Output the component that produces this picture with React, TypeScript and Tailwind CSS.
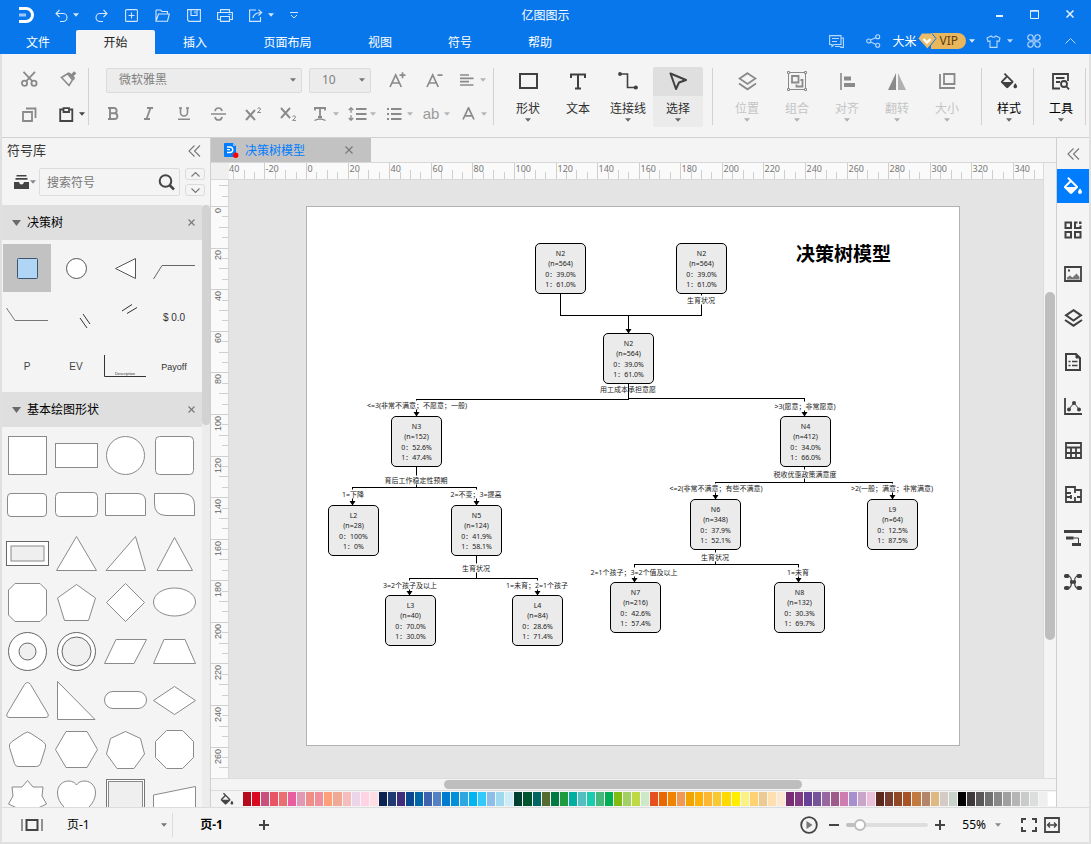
import React from "react";

type Pt = { children?: React.ReactNode };

/* ---------- small drawing helpers ---------- */

function Ico({
  w,
  h,
  box,
  sw = 1.5,
  cls = "",
  children,
}: { w: number; h: number; box?: string; sw?: number; cls?: string } & Pt) {
  return (
    <svg
      aria-hidden="true"
      width={w}
      height={h}
      viewBox={box ?? `0 0 ${w} ${h}`}
      fill="none"
      stroke="currentColor"
      strokeWidth={sw}
      className={`shrink-0 ${cls}`}
    >
      {children}
    </svg>
  );
}

function Caret({ cls = "" }: { cls?: string }) {
  return (
    <svg aria-hidden="true" width="6" height="4" viewBox="0 0 6 4" className={`shrink-0 ${cls}`}>
      <path d="M0 .3H6L3 3.7Z" fill="currentColor" />
    </svg>
  );
}

function Bucket({ size }: { size: number }) {
  return (
    <svg aria-hidden="true" width={size} height={size} viewBox="2 0 20 18" fill="currentColor" className="shrink-0">
      <path d="M16.56 8.94L7.62 0 6.21 1.41l2.38 2.38-5.15 5.15c-.59.59-.59 1.54 0 2.12l5.5 5.5c.29.29.68.44 1.06.44s.77-.15 1.06-.44l5.5-5.5c.59-.58.59-1.53 0-2.12zM5.21 10L10 5.21 14.79 10H5.21zM19 11.5s-2 2.17-2 3.5c0 1.1.9 2 2 2s2-.9 2-2c0-1.33-2-3.5-2-3.5z" />
    </svg>
  );
}

function Btn({ label, cls = "", children }: { label: string; cls?: string } & Pt) {
  return (
    <button type="button" aria-label={label} className={`flex shrink-0 items-center justify-center ${cls}`}>
      {children}
    </button>
  );
}

/* ---------- header ---------- */

function TitleBar() {
  return (
    <div className="relative flex h-[30px] items-center text-[#d3e6fc]">
      <div className="flex w-[52px] justify-center pb-px text-white">
        <Ico w={16} h={16} sw={3}>
          <path d="M1 1.5H8A6.5 6.5 0 0 1 8 14.5H1" />
          <path d="M1 8H8" stroke="#9cc9fa" />
        </Ico>
      </div>
      <Btn label="撤销" cls="w-[30px] gap-[5px]">
        <Ico w={13} h={13} sw={1.1}>
          <path d="M4.5 1L1 4.5L4.5 8M1 4.5H8a4 4 0 0 1 0 8H5" />
        </Ico>
        <Caret />
      </Btn>
      <Btn label="重做" cls="ml-1 w-[30px]">
        <Ico w={13} h={13} sw={1.1}>
          <path d="M8.5 1L12 4.5L8.5 8M12 4.5H5a4 4 0 0 0 0 8H8" />
        </Ico>
      </Btn>
      <Btn label="新建" cls="w-[31px]">
        <Ico w={13} h={13} sw={1.1}>
          <rect x=".6" y=".6" width="11.8" height="11.8" rx="1" />
          <path d="M6.5 3.5v6M3.5 6.5h6" />
        </Ico>
      </Btn>
      <Btn label="打开" cls="w-[31px]">
        <Ico w={15} h={13} sw={1.1}>
          <path d="M1 11.5V1.5Q1 1 1.5 1H5.5L7 2.5H12.5V4.5M1 12.2L3.5 5H14.3L12.5 12.2Z" />
        </Ico>
      </Btn>
      <Btn label="保存" cls="w-[31px]">
        <Ico w={14} h={13} sw={1.1}>
          <path d="M.6 .6H13.4V12.4H2L.6 11Z M4 .6V6.5H10V.6M8 2v2.5" />
        </Ico>
      </Btn>
      <Btn label="打印" cls="w-[31px]">
        <Ico w={16} h={13} sw={1.1}>
          <path d="M3.5 3.5V.6H12.5V3.5M3.5 10.5H.6V3.5H15.4V10.5H12.5M3.5 7.5H12.5V12.4H3.5ZM11.5 5.5H13.5" />
        </Ico>
      </Btn>
      <Btn label="导出" cls="w-[42px] gap-[5px]">
        <Ico w={14} h={13} sw={1.1}>
          <path d="M7 1H.6V12.4H11.5V8M4 9Q4.5 4 12.5 3.5M9.5 .6L12.7 3.5L9.5 6.5" />
        </Ico>
        <Caret />
      </Btn>
      <Btn label="自定义快速访问工具栏" cls="w-[24px]">
        <Ico w={8} h={7} sw={1}>
          <path d="M0 .5H8M1 3L4 6L7 3" />
        </Ico>
      </Btn>
      <h1 className="pointer-events-none absolute inset-x-0 top-0 pt-px text-center text-[12px] leading-[30px] font-normal text-white">
        亿图图示
      </h1>
      <div className="ml-auto flex h-full items-center pb-[2px] text-[#e6f1fe]">
        <Btn label="最小化" cls="h-full w-[35px]">
          <Ico w={7} h={6} sw={2}>
            <path d="M0 5H7" />
          </Ico>
        </Btn>
        <Btn label="最大化" cls="h-full w-[35px]">
          <Ico w={9} h={9} sw={1}>
            <path d="M.5 .5H8.5V8.5H.5ZM0 1.2H9" />
          </Ico>
        </Btn>
        <Btn label="关闭" cls="mr-1 h-full w-[35px]">
          <Ico w={8} h={8} sw={1.5}>
            <path d="M.5 .5L7.5 7.5M7.5 .5L.5 7.5" />
          </Ico>
        </Btn>
      </div>
    </div>
  );
}

const MENUS = [
  { name: "文件", cls: "w-[76px]" },
  { name: "开始", cls: "w-[79px] rounded-t-[2px] bg-[#f4f4f4] text-[#222]" },
  { name: "插入", cls: "w-20" },
  { name: "页面布局", cls: "w-[105px]" },
  { name: "视图", cls: "w-20" },
  { name: "符号", cls: "w-20" },
  { name: "帮助", cls: "w-20" },
];

function MenuBar() {
  return (
    <div className="flex h-6 items-stretch text-[12px] text-white">
      <nav className="flex">
        {MENUS.map((m) => (
          <button key={m.name} type="button" className={`shrink-0 pt-[2px] text-center leading-[22px] ${m.cls}`}>
            {m.name}
          </button>
        ))}
      </nav>
      <div className="ml-auto flex items-center pb-[2px] text-[#b9d9fb]">
        <Btn label="消息" cls="w-[37px]">
          <Ico w={15} h={13} sw={1.1}>
            <path d="M.6 .6H12V9.5H5L3 11.5V9.5H.6ZM3 3.5H10M3 6.5H8M12 3H14.4V12.4H12L11 11.5H6" />
          </Ico>
        </Btn>
        <Btn label="分享" cls="w-[37px]">
          <Ico w={15} h={14} sw={1.1}>
            <circle cx="2.7" cy="7" r="2" />
            <circle cx="11.7" cy="2.8" r="2" />
            <circle cx="11.7" cy="11.2" r="2" />
            <path d="M4.5 6L10 3.6M4.5 8L10 10.4" />
          </Ico>
        </Btn>
        <button type="button" className="flex shrink-0 items-center text-white">
          <span className="pt-px">大米</span>
          <span className="ml-[2px] flex h-4 items-center rounded-r-full bg-[#e8b65c] pr-2 text-[12px] leading-4 text-[#5f4212]">
            <svg aria-hidden="true" width="21" height="16" viewBox="0 0 21 16">
              <path d="M0 0H13V16H0Z" fill="#0977ec" />
              <path d="M4 .5H14L18 5.5L9.5 15.5L.5 5.5Z" fill="#ecbd68" />
              <path d="M14 .5L18 5.5L10 15.5" fill="none" stroke="#0977ec" />
              <path d="M5.5 6L9 9.5L12.5 6" fill="none" stroke="#fff" strokeWidth="2.4" />
            </svg>
            VIP
          </span>
          <Caret cls="ml-[3px] text-[#dcebfd]" />
        </button>
        <Btn label="主题" cls="ml-1 w-[40px] gap-[6px]">
          <Ico w={15} h={13} sw={1.1}>
            <path d="M5 1L1 3L2 6.5L4 6V12.4H11V6L13 6.5L14 3L10 1Q7.5 3.5 5 1Z" />
          </Ico>
          <Caret />
        </Btn>
        <Btn label="应用" cls="w-[30px]">
          <Ico w={14} h={14} sw={1.1}>
            <path d="M6.2 6.2H3.4A2.7 2.7 0 1 1 6.2 3.4ZM7.8 6.2V3.4A2.7 2.7 0 1 1 10.6 6.2ZM6.2 7.8V10.6A2.7 2.7 0 1 1 3.4 7.8ZM7.8 7.8H10.6A2.7 2.7 0 1 1 7.8 10.6Z" />
          </Ico>
        </Btn>
        <Btn label="收起功能区" cls="w-[42px]">
          <Ico w={11} h={6} sw={1}>
            <path d="M.5 5.5L5.5 .5L10.5 5.5" />
          </Ico>
        </Btn>
      </div>
    </div>
  );
}

/* ---------- ribbon ---------- */

const Divider = () => <div className="h-[57px] w-px shrink-0 bg-[#d2d2d2]" />;

function Select({ label, value, cls }: { label: string; value: string; cls: string }) {
  return (
    <label className={`relative flex h-[25px] shrink-0 items-center ${cls}`}>
      <select
        aria-label={label}
        defaultValue={value}
        className="h-full w-full appearance-none rounded-[2px] border border-[#d9dbde] bg-[#ececec] px-3 text-[12px] text-[#808080]"
      >
        <option>{value}</option>
      </select>
      <Caret cls="pointer-events-none absolute right-[6px] text-[#777]" />
    </label>
  );
}

function TextTool({ label, children }: { label: string } & Pt) {
  return (
    <Btn label={label} cls="h-6 w-[37px] gap-[3px]">
      <span className="flex w-5 justify-center">{children}</span>
      <Caret cls="text-[#b5b5b5]" />
    </Btn>
  );
}

function Tool({
  label,
  tone = "text-[#404040]",
  text = "text-[#303030]",
  caret = true,
  active = false,
  cls = "w-[50px]",
  children,
}: {
  label: string;
  tone?: string;
  text?: string;
  caret?: boolean;
  active?: boolean;
  cls?: string;
} & Pt) {
  return (
    <button
      type="button"
      className={`flex h-[60px] shrink-0 flex-col items-center rounded-[2px] ${active ? "bg-[#ebebeb]" : ""} ${cls}`}
    >
      <span className={`flex h-[29px] w-full items-center justify-center rounded-t-[2px] ${tone} ${active ? "bg-[#dfdfdf]" : ""}`}>
        {children}
      </span>
      <span className={`mt-1 text-[12px] leading-[18px] ${text}`}>{label}</span>
      {caret && <Caret cls={text === "text-[#c4c4c4]" ? "text-[#b0b0b0]" : "text-[#666]"} />}
    </button>
  );
}

function Ribbon() {
  const dim = { tone: "text-[#8a8a8a]", text: "text-[#c4c4c4]" };
  return (
    <div className="flex h-[84px] shrink-0 items-center border-b border-[#d0d0d0] bg-[#f4f4f4] pt-[2px] text-[#8a8a8a]">
      <div className="grid h-[60px] w-[86px] shrink-0 grid-cols-2 items-center gap-y-[10px] pl-2">
        <Btn label="剪切" cls="h-6">
          <Ico w={17} h={16} sw={1.8}>
            <circle cx="3.5" cy="12.3" r="2.6" />
            <circle cx="13" cy="12.3" r="2.6" />
            <path d="M2.5 .8L11.5 10.3M14 .8L5 10.3" />
          </Ico>
        </Btn>
        <Btn label="格式刷" cls="h-6">
          <Ico w={17} h={16} sw={1.6}>
            <path d="M1.5 6.5L7.5 2.8L12.5 8.8L9 14.5Z" />
            <path d="M7 1.8L14 9.5L15 6.5L13.5 5L16.5 2.5L14 .3L11.5 3L9.5 1.5Z" fill="currentColor" stroke="none" />
          </Ico>
        </Btn>
        <Btn label="复制" cls="h-6">
          <Ico w={15} h={15} sw={1.8}>
            <path d="M1 5H10V14H1ZM4 1.5H13.5V11" />
          </Ico>
        </Btn>
        <Btn label="粘贴" cls="h-6 gap-[5px] pl-[6px] text-[#444]">
          <Ico w={15} h={15} sw={1.8}>
            <path d="M4 2.5H1.2V14H13.3V2.5H10.5" />
            <path d="M4.5 1.2H10V5H4.5Z" />
          </Ico>
          <Caret />
        </Btn>
      </div>
      <Divider />
      <div className="flex shrink-0 flex-col gap-y-[9px] pl-[7px]">
        <div className="flex items-center pl-[10px]">
          <Select label="字体" value="微软雅黑" cls="w-[196px]" />
          <Select label="字号" value="10" cls="ml-[7px] w-[62px]" />
          <Btn label="增大字号" cls="ml-2 h-6 w-[37px]">
            <Ico w={17} h={16} sw={1.7}>
              <path d="M1 15L6.7 3L12.3 15M3 11H10.5M10.5 3.2H16.5M13.5 .2V6.2" />
            </Ico>
          </Btn>
          <Btn label="减小字号" cls="h-6 w-[37px]">
            <Ico w={17} h={16} sw={1.7}>
              <path d="M1 15L6.7 3L12.3 15M3 11H10.5M11.5 3.2H16.5" />
            </Ico>
          </Btn>
          <TextTool label="对齐方式">
            <Ico w={14} h={12} sw={1.7}>
              <path d="M0 1H9M0 4.3H13.5M0 7.7H9M0 11H13.5" />
            </Ico>
          </TextTool>
        </div>
        <div className="flex items-center">
          <Btn label="加粗" cls="h-6 w-[35px]">
            <Ico w={11} h={13} sw={1.9}>
              <path d="M0 1H6a2.6 2.6 0 0 1 0 5.3H2M2 1V12H6.5a2.8 2.8 0 0 0 0-5.7M0 12H2" />
            </Ico>
          </Btn>
          <Btn label="斜体" cls="h-6 w-[35px]">
            <Ico w={11} h={13} sw={1.8}>
              <path d="M4 1H10M1 12H7M7.5 1L3.5 12" />
            </Ico>
          </Btn>
          <Btn label="下划线" cls="h-6 w-[35px]">
            <Ico w={12} h={13} sw={1.6}>
              <path d="M1 1H4M8 1H11M2.5 1V5.5a3.5 3.5 0 0 0 7 0V1M0 12.3H12" />
            </Ico>
          </Btn>
          <Btn label="删除线" cls="h-6 w-[35px]">
            <Ico w={15} h={14} sw={1.7}>
              <path d="M11 4Q10.5 1 7.5 1T4 4.2M4 10Q4.5 13 7.5 13T11 9.8M0 7H15" />
            </Ico>
          </Btn>
          <Btn label="上标" cls="h-6 w-[35px]">
            <Ico w={17} h={14} sw={1.9}>
              <path d="M1 3L10 13M10 3L1 13" />
              <path d="M12.5 1.5Q14 .2 15.3 1.3T12.5 5.5H16" strokeWidth="1" />
            </Ico>
          </Btn>
          <Btn label="下标" cls="h-6 w-[35px]">
            <Ico w={17} h={14} sw={1.9}>
              <path d="M1 1L10 11M10 1L1 11" />
              <path d="M12.5 9.5Q14 8.2 15.3 9.3T12.5 13.4H16" strokeWidth="1" />
            </Ico>
          </Btn>
          <TextTool label="文字效果">
            <Ico w={12} h={14} sw={1.8}>
              <path d="M1 3.5V1H11V3.5M6 1V10M4 10H8" />
              <path d="M.5 13.5Q6 10.5 11.5 13.5" strokeWidth="1.3" />
            </Ico>
          </TextTool>
          <TextTool label="行距">
            <Ico w={19} h={14} sw={1.8}>
              <path d="M8 2H18.5M8 7H18.5M8 12H18.5" />
              <path d="M3 .8V5.8M.7 3L3 .8L5.3 3M3 8.2V13.2M.7 11L3 13.2L5.3 11" strokeWidth="1.3" />
            </Ico>
          </TextTool>
          <TextTool label="项目符号">
            <Ico w={15} h={12} sw={1.8}>
              <path d="M0 1H2M0 6H2M0 11H2M4 1H14.5M4 6H14.5M4 11H14.5" />
            </Ico>
          </TextTool>
          <TextTool label="大小写">
            <span className="font-['Liberation_Sans'] text-[15px] leading-5 text-[#9a9a9a]">ab</span>
          </TextTool>
          <TextTool label="字体颜色">
            <Ico w={13} h={13} sw={1.7}>
              <path d="M1 12.5L6.5 .8L12 12.5M3 8.8H10" />
            </Ico>
          </TextTool>
        </div>
      </div>
      <div className="ml-[2px] flex items-center gap-[9px]">
        <Divider />
        <div className="flex">
          <Tool label="形状">
            <Ico w={19} h={16} sw={2}>
              <rect x="1" y="1" width="17" height="14" />
            </Ico>
          </Tool>
          <Tool label="文本" caret={false}>
            <Ico w={16} h={17} sw={2}>
              <path d="M1 5V1.5H15V5M8 1.5V15.5M5 15.5H11" />
            </Ico>
          </Tool>
          <Tool label="连接线">
            <Ico w={20} h={18} sw={1.6}>
              <path d="M3 2H9.5V15.5H17" />
              <circle cx="2" cy="2" r="1.9" fill="currentColor" stroke="none" />
              <circle cx="17.8" cy="15.5" r="2.1" fill="currentColor" stroke="none" />
            </Ico>
          </Tool>
          <Tool label="选择" active>
            <Ico w={18} h={18} sw={2}>
              <path d="M1.5 1.5L17 8L10 10.5L7 17Z" strokeLinejoin="round" />
            </Ico>
          </Tool>
        </div>
        <Divider />
        <div className="flex">
          <Tool label="位置" {...dim}>
            <Ico w={19} h={19} sw={1.8}>
              <path d="M9.5 1.2L17.5 6.5L9.5 12L1.5 6.5ZM1 11.5L9.5 17.3L18 11.5" />
            </Ico>
          </Tool>
          <Tool label="组合" {...dim}>
            <Ico w={20} h={20} sw={1}>
              <path d="M3 1.5H17M3 18.5H17M1.5 3V17M18.5 3V17M.5 .5H2.5V2.5H.5ZM17.5 .5H19.5V2.5H17.5ZM.5 17.5H2.5V19.5H.5ZM17.5 17.5H19.5V19.5H17.5Z" />
              <path d="M5 5H11.5V11.5H5ZM13.5 9H15.5V15.5H9.5V13.5" strokeWidth="1.8" />
            </Ico>
          </Tool>
          <Tool label="对齐" {...dim}>
            <Ico w={15} h={17} sw={1.6}>
              <path d="M1 0V17" />
              <rect x="4" y="3.500" width="7" height="4" fill="currentColor" stroke="none" />
              <rect x="4" y="10" width="11" height="4" fill="currentColor" stroke="none" />
            </Ico>
          </Tool>
          <Tool label="翻转" {...dim}>
            <Ico w={18} h={17} sw={0}>
              <path d="M8 0V17H0Z" fill="currentColor" />
              <path d="M10 0V17H18Z" fill="#b0b0b0" />
            </Ico>
          </Tool>
          <Tool label="大小" {...dim}>
            <Ico w={17} h={16} sw={1.8}>
              <path d="M5 1H15.5V11H5ZM1 1V15H16" />
            </Ico>
          </Tool>
        </div>
        <Divider />
      </div>
      <div className="flex items-center">
        <Tool label="样式" text="text-black" cls="w-[51px] pl-[3px]">
          <Bucket size={18} />
        </Tool>
        <Divider />
        <Tool label="工具" text="text-black" cls="w-[51px] pl-[3px]">
          <Ico w={18} h={17} sw={1.8}>
            <path d="M16 8V1H1V15.5H8M4 5H12.5M4 9H8" />
            <circle cx="12" cy="11" r="3" />
            <path d="M14 13L17 16.3" />
          </Ico>
        </Tool>
        <Divider />
      </div>
    </div>
  );
}

/* ---------- symbol library ---------- */

const TREE_SHAPES: [string, React.ReactNode][] = [
  ["决策", <rect x="14.5" y="14.5" width="20" height="20" rx="1" fill="#b0d5f5" stroke="#3c5670" />],
  ["机会", <circle cx="24.5" cy="24.5" r="10" stroke="#555" />],
  ["终点", <path d="M14.5 24.5L34.5 14.5V34.5Z" stroke="#555" />],
  ["上分支", <path d="M3.5 35L12 21.5H45" fill="none" stroke="#666" />],
  ["下分支", <path d="M3.5 15L12 27.5H45" fill="none" stroke="#777" />],
  ["截断一", <path d="M28 25L35 35M31 21L38 31" fill="none" stroke="#333" />],
  ["截断二", <path d="M21 18L31 11.5M26 20.5L36 14.5" fill="none" stroke="#333" />],
  ["金额", <text x="24" y="28" textAnchor="middle" fontSize="10" fill="#333" stroke="none">$ 0.0</text>],
  ["概率", <text x="24" y="28" textAnchor="middle" fontSize="10" fill="#444" stroke="none">P</text>],
  ["期望值", <text x="24" y="28" textAnchor="middle" fontSize="10" fill="#444" stroke="none">EV</text>],
  [
    "说明",
    <g>
      <path d="M3.5 13V34.5H45" fill="none" stroke="#333" />
      <text x="24" y="33" textAnchor="middle" fontSize="4" fill="#333" stroke="none">Description</text>
    </g>,
  ],
  ["收益", <text x="24" y="28" textAnchor="middle" fontSize="9" fill="#333" stroke="none">Payoff</text>],
];

const BASIC_SHAPES: [string, React.ReactNode][] = [
  ["正方形", <rect x="5.5" y="5.5" width="38" height="38" />],
  ["矩形", <rect x="3.5" y="12.5" width="42" height="24" />],
  ["圆形", <circle cx="24.5" cy="24.5" r="19" />],
  ["圆角正方形", <rect x="5.5" y="5.5" width="38" height="38" rx="4" />],
  ["圆角矩形", <rect x="4.5" y="13.5" width="39" height="23" rx="3.5" />],
  ["圆角框", <rect x="3.5" y="12.5" width="42" height="24" rx="4" />],
  ["单圆角矩形", <path d="M4.5 13.5H37Q44.5 14 44.5 21V35.5H4.5Z" />],
  ["对角圆角矩形", <path d="M4.5 13.5H33Q44.5 14 44.5 25V35.5H16Q4.5 35 4.5 24Z" />],
  [
    "框架",
    <g>
      <rect x="3.5" y="12.5" width="42" height="24" stroke="#666" />
      <rect x="8" y="17" width="33" height="15" fill="#efefef" />
    </g>,
  ],
  ["等腰三角形", <path d="M24.5 7.5L44.5 41.5H4.5Z" />],
  ["三角形", <path d="M5 41.5L34.5 7.5L44.5 41.5Z" />],
  ["锐角三角形", <path d="M24.5 8.5L42.5 41.5H7Z" />],
  ["切角正方形", <path d="M12 5.5H37L43.5 12V37L37 43.5H12L5.5 37V12Z" />],
  ["五边形", <path d="M24.5 6.5L43.5 20L36.5 42.5H12.5L5.5 20Z" />],
  ["菱形", <path d="M24.5 5.5L43.5 24.5L24.5 43.5L5.5 24.5Z" />],
  ["椭圆", <ellipse cx="24.5" cy="24" rx="21" ry="14" />],
  [
    "圆环",
    <g stroke="#666">
      <circle cx="24.5" cy="24.5" r="19" />
      <circle cx="24.5" cy="24.5" r="8.5" fill="#f0f0f0" />
    </g>,
  ],
  [
    "同心圆",
    <g stroke="#666">
      <circle cx="24.5" cy="24.5" r="19" />
      <circle cx="24.5" cy="24.5" r="14.5" fill="#f0f0f0" />
    </g>,
  ],
  ["平行四边形", <path d="M15 12.5H45.5L33 36.5H3.5Z" />],
  ["梯形", <path d="M14 12.5H35L45.5 36.5H3.5Z" />],
  ["圆角三角形", <path d="M21.5 8.5Q24.5 4.5 27.5 8.5L44.5 37Q47 41.5 42 41.5H7Q2 41.5 4.5 37Z" />],
  ["直角三角形", <path d="M5.5 5.5L43 43.5H5.5Z" />],
  ["胶囊形", <rect x="3.5" y="15.5" width="42" height="17" rx="8.5" />],
  ["扁菱形", <path d="M24.5 10.5L45.5 24.5L24.5 38.5L3.5 24.5Z" />],
  ["圆角五边形", <path d="M21 8.5Q24.5 5.5 28 8.5L40 16.5Q43.5 19 42.5 22.5L37.5 38.5Q36.5 41.5 33.5 41.5H15Q12.5 41.5 11.5 38.5L6.5 22.5Q5.5 19 9 16.5Z" />],
  ["六边形", <path d="M14 6.5H35L45.5 24.5L35 42.5H14L3.5 24.5Z" />],
  ["七边形", <path d="M24.5 6.5L39.5 13.5L43.5 29L33 43.5H16L5.5 29L9.5 13.5Z" />],
  ["八边形", <path d="M16.5 5.5H32.5L43.5 16.5V32.5L32.5 43.5H16.5L5.5 32.5V16.5Z" />],
  ["七角星", <path d="M24.5 6.5L30 13H40L39 22L43.5 30L35 34L32 43L24.5 39L17 43L14 34L5.5 30L10 22L9 13H19Z" />],
  ["心形", <path d="M24.5 11C29 4 43.5 6 43.5 19C43.5 30 32 38 24.5 43C17 38 5.5 30 5.5 19C5.5 6 20 4 24.5 11Z" />],
  [
    "双框正方形",
    <g>
      <rect x="5.5" y="5.5" width="38" height="38" stroke="#777" />
      <rect x="7.5" y="7.5" width="34" height="34" fill="#efefef" />
    </g>,
  ],
  ["手动输入", <path d="M3.5 21L45.5 12.5V40H3.5Z" />],
];

function ShapeGrid({ items, selected }: { items: [string, React.ReactNode][]; selected?: number }) {
  return (
    <div className="grid grid-cols-4 pl-px">
      {items.map(([name, art], i) => (
        <button key={name} type="button" aria-label={name} className="h-[49px]">
          <svg
            width="48"
            height="48"
            viewBox="0 0 48 48"
            fill="#fff"
            stroke="#8a8a8a"
            className={`font-['Liberation_Sans'] ${i === selected ? "bg-[#c2c2c2]" : ""}`}
          >
            {art}
          </svg>
        </button>
      ))}
    </div>
  );
}

function SectionHead({ title }: { title: string }) {
  return (
    <div className="flex h-[35px] items-center bg-[#dfdfdf] pr-[7px] pl-[10px] text-[12px] text-black">
      <Ico w={9} h={6} sw={0} cls="text-[#6a6a6a]">
        <path d="M0 0H9L4.500 6Z" fill="currentColor" />
      </Ico>
      <h3 className="ml-[6px] flex-1">{title}</h3>
      <Btn label={`关闭${title}`} cls="size-[8px] text-[#777]">
        <Ico w={7} h={7} sw={1.1}>
          <path d="M.5 .5L6.5 6.5M6.5 .5L.5 6.5" />
        </Ico>
      </Btn>
    </div>
  );
}

const DoubleLeft = () => (
  <Ico w={13} h={12} sw={1.1}>
    <path d="M6.5 .5L1 6L6.500 11.500M12 .5L6.500 6L12 11.500" />
  </Ico>
);

function Library() {
  return (
    <aside className="flex w-[209px] shrink-0 flex-col border-r border-[#cfcfcf]">
      <div className="flex h-[30px] shrink-0 items-center justify-between pr-[9px] pb-1 pl-[5px] text-[13px] text-[#333]">
        <h2>符号库</h2>
        <Btn label="收起符号库" cls="text-[#777]">
          <DoubleLeft />
        </Btn>
      </div>
      <div className="flex h-[37px] shrink-0 items-start pr-[5px] pl-[11px]">
        <Btn label="符号库分类" cls="h-7 w-[26px] gap-px pr-[3px] text-[#444]">
          <Ico w={15} h={14} sw={0}>
            <path d="M2.5 0H12.5V1.6H2.5ZM1.5 3H13.5V4.8H1.5ZM0 7H5Q5.5 9.5 7.5 9.5T10 7H15V14H0Z" fill="currentColor" />
          </Ico>
          <Caret cls="text-[#888]" />
        </Btn>
        <label className="relative flex h-7 flex-1 items-center">
          <input
            type="text"
            aria-label="搜索符号"
            placeholder="搜索符号"
            className="h-full w-full rounded-[2px] border border-[#dcdcdc] bg-transparent pr-7 pl-[7px] text-[12px] placeholder:text-[#777]"
          />
          <Ico w={17} h={17} sw={2} cls="absolute right-[5px] text-[#444]">
            <circle cx="7.5" cy="7" r="5.8" />
            <path d="M11.5 11L16 15.5" strokeWidth="2.5" />
          </Ico>
        </label>
        <div className="ml-[5px] flex h-7 w-5 flex-col justify-between text-[#777]">
          <Btn label="上一个" cls="h-3 rounded-[3px] border border-[#dcdcdc]">
            <Ico w={9} h={5} sw={1.1}>
              <path d="M.5 4.5L4.5 .5L8.5 4.5" />
            </Ico>
          </Btn>
          <Btn label="下一个" cls="h-3 rounded-[3px] border border-[#dcdcdc]">
            <Ico w={9} h={5} sw={1.1}>
              <path d="M.5 .5L4.5 4.5L8.5 .5" />
            </Ico>
          </Btn>
        </div>
      </div>
      <div className="flex min-h-0 flex-1 overflow-hidden">
        <div className="min-w-0 flex-1">
          <SectionHead title="决策树" />
          <div className="pt-[3px] pr-[3px] pb-[2px]">
            <ShapeGrid items={TREE_SHAPES} selected={0} />
          </div>
          <SectionHead title="基本绘图形状" />
          <div className="pt-[3px] pr-[3px]">
            <ShapeGrid items={BASIC_SHAPES} />
          </div>
        </div>
        <div className="w-2 bg-[#ececec]">
          <div className="h-[220px] rounded-full bg-[#d2d2d2]" />
        </div>
      </div>
    </aside>
  );
}

/* ---------- rulers ---------- */

const UNIT = 2.0794;

function TopRuler() {
  const zero = 77.5;
  const ticks = Array.from({ length: 78 }, (_, i) => (i - 7) * 5);
  return (
    <svg
      role="img"
      aria-label="水平标尺"
      height="16"
      className="block w-full min-w-0 flex-1 bg-[#fafafa] font-['Noto_Sans'] text-[9px]"
      shapeRendering="crispEdges"
    >
      <text x="0" y="9" fill="#777">
        40
      </text>
      {ticks.map((t) => {
        const x = Math.floor(zero + t * UNIT) + 0.5;
        return (
          <g key={t}>
            <path d={`M${x} ${t % 20 === 0 ? 0 : t % 10 === 0 ? 7 : 9}V16`} stroke="#cfcfcf" />
            {t % 20 === 0 && (
              <text x={x + 1} y="9" fill="#777">
                {t}
              </text>
            )}
          </g>
        );
      })}
    </svg>
  );
}

function SideRuler() {
  const zero = 26.5;
  const ticks = Array.from({ length: 57 }, (_, i) => (i - 2) * 5);
  return (
    <svg
      role="img"
      aria-label="垂直标尺"
      width="18"
      className="block h-full shrink-0 border-r border-[#d8d8d8] bg-[#fafafa] font-['Liberation_Sans'] text-[9px]"
      shapeRendering="crispEdges"
    >
      {ticks.map((t) => {
        const y = Math.floor(zero + t * UNIT) + 0.5;
        return (
          <g key={t}>
            <path d={`M${t % 20 === 0 ? 0 : t % 10 === 0 ? 8 : 11} ${y}H18`} stroke="#cfcfcf" />
            {t % 20 === 0 && t >= 0 && t <= 260 && (
              <text transform={`translate(10 ${y + 1.5}) rotate(-90)`} textAnchor="end" fill="#666">
                {t}
              </text>
            )}
          </g>
        );
      })}
    </svg>
  );
}

/* ---------- diagram ---------- */

type Node = { x: number; y: number; id: string; n: string; a: string; b: string };

const NODES: Node[] = [
  { x: 228, y: 36, id: "N2", n: "564", a: "39.0%", b: "61.0%" },
  { x: 369, y: 36, id: "N2", n: "564", a: "39.0%", b: "61.0%" },
  { x: 296, y: 126, id: "N2", n: "564", a: "39.0%", b: "61.0%" },
  { x: 84, y: 209, id: "N3", n: "152", a: "52.6%", b: "47.4%" },
  { x: 473, y: 209, id: "N4", n: "412", a: "34.0%", b: "66.0%" },
  { x: 21, y: 298, id: "L2", n: "28", a: "100%", b: "0%" },
  { x: 144, y: 298, id: "N5", n: "124", a: "41.9%", b: "58.1%" },
  { x: 383, y: 292, id: "N6", n: "348", a: "37.9%", b: "52.1%" },
  { x: 560, y: 292, id: "L9", n: "64", a: "12.5%", b: "87.5%" },
  { x: 78, y: 388, id: "L3", n: "40", a: "70.0%", b: "30.0%" },
  { x: 205, y: 388, id: "L4", n: "84", a: "28.6%", b: "71.4%" },
  { x: 303, y: 375, id: "N7", n: "216", a: "42.6%", b: "57.4%" },
  { x: 467, y: 375, id: "N8", n: "132", a: "30.3%", b: "69.7%" },
];

const LABELS: { x: number; y: number; text: string; clear?: boolean }[] = [
  { x: 394, y: 93, text: "生育状况" },
  { x: 321, y: 182, text: "用工成本承担意愿", clear: true },
  { x: 110, y: 198, text: "<=3(非常不满意；不愿意；一般)" },
  { x: 498, y: 199, text: ">3(愿意；非常愿意)" },
  { x: 109, y: 273, text: "育后工作稳定性预期" },
  { x: 46, y: 287, text: "1=下降" },
  { x: 169, y: 287, text: "2=不变；3=提高" },
  { x: 169, y: 361, text: "生育状况" },
  { x: 103, y: 378, text: "3=2个孩子及以上" },
  { x: 230, y: 378, text: "1=未育；2=1个孩子" },
  { x: 498, y: 267, text: "税收优惠政策满意度" },
  { x: 409, y: 281, text: "<=2(非常不满意；有些不满意)" },
  { x: 585, y: 281, text: ">2(一般；满意；非常满意)" },
  { x: 408, y: 350, text: "生育状况" },
  { x: 327, y: 365, text: "2=1个孩子；3=2个值及以上" },
  { x: 491, y: 365, text: "1=未育" },
];

const ARROWS: [number, number][] = [
  [321.5, 126],
  [109.5, 209],
  [497.5, 209],
  [45.5, 298],
  [169.5, 298],
  [102.5, 388],
  [230.5, 388],
  [408.5, 292],
  [585.5, 292],
  [327.5, 375],
  [491.5, 375],
];

function Diagram() {
  return (
    <div className="relative h-[540px] w-[654px] shrink-0 border border-[#b2b2b2] bg-white text-[#222]">
      <svg aria-hidden="true" className="absolute inset-0 h-full w-full" fill="none" stroke="#000" shapeRendering="crispEdges">
        <path d="M253.5 87V108.5H394.5V87M321.5 108V126" />
        <path d="M321.5 176V192.5H109.5V209M321.5 191.5H497.5V209" />
        <path d="M109.5 260V280.5M45.5 298V280.5H169.5V298" />
        <path d="M169.5 348V371.5M102.5 388V371.5H230.5V388" />
        <path d="M497.5 259V275.5M408.5 292V275.5H585.5V292" />
        <path d="M408.5 343V357.5M327.5 375V357.5H491.5V375" />
        {ARROWS.map(([x, y]) => (
          <path key={`${x}-${y}`} d={`M${x - 3} ${y - 4}H${x + 3}L${x} ${y + 0.5}Z`} fill="#000" stroke="none" shapeRendering="auto" />
        ))}
      </svg>
      {LABELS.map((l) => (
        <span
          key={`${l.x}-${l.y}`}
          style={{ left: l.x, top: l.y }}
          className={`absolute -translate-x-1/2 -translate-y-1/2 text-[7px] leading-[9px] whitespace-nowrap ${l.clear ? "" : "bg-white"}`}
        >
          {l.text}
        </span>
      ))}
      {NODES.map((n) => (
        <div
          key={`${n.x}-${n.y}`}
          style={{ left: n.x, top: n.y }}
          className="absolute grid h-[51px] w-[51px] grid-rows-4 rounded-[5px] border border-black bg-[#ebebeb] pt-[5px] pb-[3px] text-center text-[7px] leading-[10px] whitespace-nowrap"
        >
          <span>{n.id}</span>
          <span>(n={n.n})</span>
          <span>0：{n.a}</span>
          <span>1：{n.b}</span>
        </div>
      ))}
      <h2 className="absolute top-[35px] left-[489px] text-[19px] leading-6 font-bold whitespace-nowrap text-black">
        决策树模型
      </h2>
    </div>
  );
}

/* ---------- colour strip ---------- */

const COLOURS =
  "#b40a1b #d9091f #c94f7c #e95464 #eb6e71 #e85e9f #e198b4 #ef8d86 #f08f9b #ff9f7a #f0a994 #f7bdbd #ead6e8 #ffd2e4 #ffdfe4 #0b2350 #203a72 #3f2d7c #0a4790 #0066a8 #3e62ad #5382c4 #007bd0 #0090d9 #2ea7e0 #00b5f1 #33c9fa #8bbfea #9fd9f0 #cdecf8 #004033 #00552e #006663 #556b2f #007a43 #1f9a3f #00afa0 #53bfc0 #19ceb0 #45b97c #00ae53 #80bc11 #a3d062 #bfd944 #cde7c9 #e64f1e #eb6800 #f08300 #f29855 #f2a500 #ffb000 #ffb733 #f8ca2f #ffd900 #ffee00 #fcf281 #ffd271 #eccb93 #ffdfb0 #fce8d0 #782e72 #823a82 #674196 #75549c #9869a0 #9f5a8c #cd7db0 #a98fcf #c8a6ca #ebc0da #5b281b #763c30 #914826 #a95426 #c17a40 #b4856a #dfb982 #d3ccc6 #c9d3c9 #000000 #3e3838 #595757 #727171 #898989 #9fa0a0 #b5b5b6 #c9caca #dcdddd #efefef #ffffff".split(
    " ",
  );

function Workspace() {
  return (
    <main className="flex min-w-0 flex-1 flex-col">
      <div className="flex h-[25px] shrink-0 border-b border-[#d8d8d8]">
        <div className="flex w-40 items-center bg-[#c2c2c2] pr-[18px] pl-[13px] text-[12px] text-[#007dff]">
          <svg aria-hidden="true" width="15" height="16" viewBox="0 0 15 16">
            <path d="M0 2Q0 1 1 1H9L12 4V14Q12 15 11 15H1Q0 15 0 14Z" fill="#007dff" />
            <path d="M9 1L12 4H9Z" fill="#8cc4ff" />
            <path d="M3 5H6A2.7 2.7 0 0 1 6 10.5H3M3 7.7H6" fill="none" stroke="#fff" strokeWidth="1.3" />
            <circle cx="11.7" cy="13.2" r="2.7" fill="#f00" />
          </svg>
          <span className="ml-[6px] flex-1 pt-px">决策树模型</span>
          <Btn label="关闭页面" cls="text-[#777]">
            <Ico w={8} h={8} sw={1.1}>
              <path d="M.5 .5L7.5 7.5M7.5 .5L.5 7.5" />
            </Ico>
          </Btn>
        </div>
      </div>
      <div className="flex min-h-0 flex-1">
        <div className="flex min-w-0 flex-1 flex-col">
          <div className="flex h-[17px] shrink-0 border-b border-[#d8d8d8]">
            <div className="w-[18px] shrink-0 bg-[#efefef]" />
            <TopRuler />
          </div>
          <div className="flex min-h-0 flex-1">
            <SideRuler />
            <div className="min-w-0 flex-1 overflow-hidden bg-[#e4e4e4] pt-[26px] pl-[77px]">
              <Diagram />
            </div>
          </div>
        </div>
        <div className="w-[13px] shrink-0 border-l border-[#dcdcdc] pt-[129px] pl-px">
          <div className="h-[348px] w-[10px] rounded-full bg-[#bebebe]" />
        </div>
      </div>
      <div className="flex h-[13px] shrink-0 items-center border-y border-[#dcdcdc] pl-[233px]">
        <div className="h-[9px] w-[358px] rounded-full bg-[#bebebe]" />
      </div>
      <div className="flex h-4 shrink-0 items-center">
        <Btn label="填充颜色" cls="w-8 text-[#444]">
          <Bucket size={14} />
        </Btn>
        <div className="flex h-[14px] min-w-0 flex-1 gap-px">
          {COLOURS.map((c) => (
            <button key={c} type="button" aria-label={c} className="h-full min-w-0 flex-1" style={{ backgroundColor: c }} />
          ))}
        </div>
      </div>
    </main>
  );
}

/* ---------- right tool strip ---------- */

const PANELS: [string, React.ReactNode][] = [
  [
    "符号",
    <Ico w={18} h={18} sw={2}>
      <path d="M1.5 1.5H7V7H1.5ZM1.5 11H7V16.5H1.5ZM11 11H16.5V16.5H11ZM13.5 1.5H11V7H16.5V4.5" />
      <path d="M15 .5H17.5V3H15Z" fill="currentColor" stroke="none" />
    </Ico>,
  ],
  [
    "图片",
    <Ico w={18} h={16} sw={1.8}>
      <path d="M1 1H17V15H1Z" />
      <path d="M3 13.5V11.5L6 9.5L8.5 11.5L12.5 7.5L15.5 11V13.5Z" fill="#777" stroke="none" />
      <path d="M4 4.5H6" />
    </Ico>,
  ],
  [
    "图层",
    <Ico w={19} h={18} sw={2}>
      <path d="M9.5 1.2L17 6.3L9.5 11.5L2 6.3ZM1 11L9.5 16.7L18 11" />
    </Ico>,
  ],
  [
    "备注",
    <Ico w={16} h={18} sw={2}>
      <path d="M1 1H11L15 5V17H1Z" />
      <path d="M11 1V5H15Z" fill="currentColor" strokeWidth="1" />
      <path d="M3.5 8.5H5.5M7 8.5H12.5M3.5 12.5H5.5M7 12.5H12.5" strokeWidth="1.5" />
    </Ico>,
  ],
  [
    "图表",
    <Ico w={18} h={17} sw={1.8}>
      <path d="M1 0V16H18" />
      <path d="M5 11L10 5L15 11" strokeWidth="1" />
      <g fill="currentColor" stroke="none">
        <circle cx="5" cy="11.5" r="2" />
        <circle cx="10" cy="5" r="2" />
        <circle cx="15" cy="11.5" r="2" />
      </g>
    </Ico>,
  ],
  [
    "表格",
    <Ico w={17} h={17} sw={1.8}>
      <path d="M1 1H16V16H1ZM1 5.5H16M1 11H16M6 5.5V16M11 5.5V16" />
    </Ico>,
  ],
  [
    "平面图",
    <Ico w={17} h={17} sw={2}>
      <path d="M10 4V1H1V16H16V4H10M1 7H6M10 3V7M6 11H1M6 9V13M10 16V11M16 11H12" strokeWidth="1.8" />
    </Ico>,
  ],
  [
    "甘特图",
    <Ico w={18} h={17} sw={3}>
      <path d="M0 1.5H18M2 8H9.5M8 14.5H17" />
      <path d="M9 8H14.5V13" strokeWidth="1" />
    </Ico>,
  ],
  [
    "思维导图",
    <Ico w={18} h={16} sw={1.2}>
      <path d="M4 2Q7.5 2 7.5 8T4 14M14 2Q10.5 2 10.5 8T14 14M6 8H12" />
      <g fill="currentColor" stroke="none">
        <rect x="0" y="0" width="5.5" height="4" rx="1.8" />
        <rect x="12.5" y="0" width="5.5" height="4" rx="1.8" />
        <rect x="0" y="12" width="5.5" height="4" rx="1.8" />
        <rect x="12.5" y="12" width="5.5" height="4" rx="1.8" />
        <rect x="6" y="6.3" width="6" height="3.4" rx="1" />
      </g>
    </Ico>,
  ],
];

function SideTools() {
  return (
    <aside className="flex w-[33px] shrink-0 flex-col border-l border-[#cfcfcf] text-[#404040]">
      <Btn label="展开面板" cls="h-[31px] text-[#777]">
        <DoubleLeft />
      </Btn>
      <Btn label="填充" cls="mb-[5px] h-[34px] bg-[#007dff] text-white">
        <Bucket size={20} />
      </Btn>
      {PANELS.map(([name, art]) => (
        <Btn key={name} label={name} cls="h-11">
          {art}
        </Btn>
      ))}
    </aside>
  );
}

/* ---------- status bar ---------- */

function StatusBar() {
  return (
    <footer className="flex h-[35px] shrink-0 items-center border-t border-[#dcdcdc] text-[12px] text-black">
      <Btn label="页面列表" cls="w-[60px] text-[#444]">
        <Ico w={22} h={12} sw={2}>
          <path d="M5.5 1H16.5V11H5.5Z" />
          <path d="M1 0V12M21 0V12" stroke="#888" strokeWidth="1.8" />
        </Ico>
      </Btn>
      <label className="relative flex h-6 w-[111px] items-center border-r border-[#dcdcdc]">
        <select aria-label="当前页面" defaultValue="页-1" className="h-full w-full appearance-none bg-transparent px-[5px]">
          <option>页-1</option>
        </select>
        <Caret cls="pointer-events-none absolute right-[5px] text-[#777]" />
      </label>
      <button type="button" className="w-[77px] shrink-0 text-center font-bold">
        页-1
      </button>
      <Btn label="新建页面" cls="w-7 text-[#444]">
        <Ico w={10} h={10} sw={2}>
          <path d="M5 0V10M0 5H10" />
        </Ico>
      </Btn>
      <div className="ml-auto flex items-center text-[#444]">
        <Btn label="放映" cls="w-[28px]">
          <Ico w={18} h={18} sw={1.8}>
            <circle cx="9" cy="9" r="7.8" />
            <path d="M6.5 5L12.5 9L6.5 13Z" fill="#777" stroke="none" />
          </Ico>
        </Btn>
        <Btn label="缩小" cls="w-[22px]">
          <Ico w={10} h={10} sw={2}>
            <path d="M0 5H10" />
          </Ico>
        </Btn>
        <input
          type="range"
          aria-label="缩放"
          min={0}
          max={100}
          defaultValue={11}
          className="mx-px h-3 w-[82px] appearance-none bg-transparent [&::-webkit-slider-runnable-track]:h-1 [&::-webkit-slider-runnable-track]:rounded-full [&::-webkit-slider-runnable-track]:bg-linear-to-r [&::-webkit-slider-runnable-track]:from-[#c0c0c0] [&::-webkit-slider-runnable-track]:from-10% [&::-webkit-slider-runnable-track]:to-[#dedede] [&::-webkit-slider-runnable-track]:to-10% [&::-webkit-slider-thumb]:-mt-1 [&::-webkit-slider-thumb]:size-3 [&::-webkit-slider-thumb]:appearance-none [&::-webkit-slider-thumb]:rounded-full [&::-webkit-slider-thumb]:border-2 [&::-webkit-slider-thumb]:border-[#bdbdbd] [&::-webkit-slider-thumb]:bg-white"
        />
        <Btn label="放大" cls="w-[22px]">
          <Ico w={10} h={10} sw={2}>
            <path d="M5 0V10M0 5H10" />
          </Ico>
        </Btn>
        <button type="button" className="ml-[11px] flex items-center gap-[9px] text-black">
          55%
          <Caret cls="text-[#888]" />
        </button>
        <Btn label="全屏" cls="ml-[17px] w-[22px]">
          <Ico w={16} h={14} sw={2}>
            <path d="M1 5V1H5M11 1H15V5M15 9V13H11M5 13H1V9" />
          </Ico>
        </Btn>
        <Btn label="适应宽度" cls="mr-[26px] w-[23px]">
          <Ico w={16} h={16} sw={1.8}>
            <path d="M1 1H15V15H1Z" />
            <path d="M4 8H12M6 5.5L3.5 8L6 10.5M10 5.5L12.5 8L10 10.5" strokeWidth="1.4" />
          </Ico>
        </Btn>
      </div>
    </footer>
  );
}

export default function App() {
  return (
    <div className="flex h-screen flex-col overflow-hidden bg-[#f4f4f4] font-['Noto_Sans','Noto_Sans_CJK_SC',sans-serif]">
      <header className="shrink-0 bg-[#0977ec]">
        <TitleBar />
        <MenuBar />
      </header>
      <div className="flex min-h-0 flex-1 flex-col border-x-2 border-b-2 border-[#e0e0e0]">
        <Ribbon />
        <div className="flex min-h-0 flex-1">
          <Library />
          <Workspace />
          <SideTools />
        </div>
        <StatusBar />
      </div>
    </div>
  );
}
